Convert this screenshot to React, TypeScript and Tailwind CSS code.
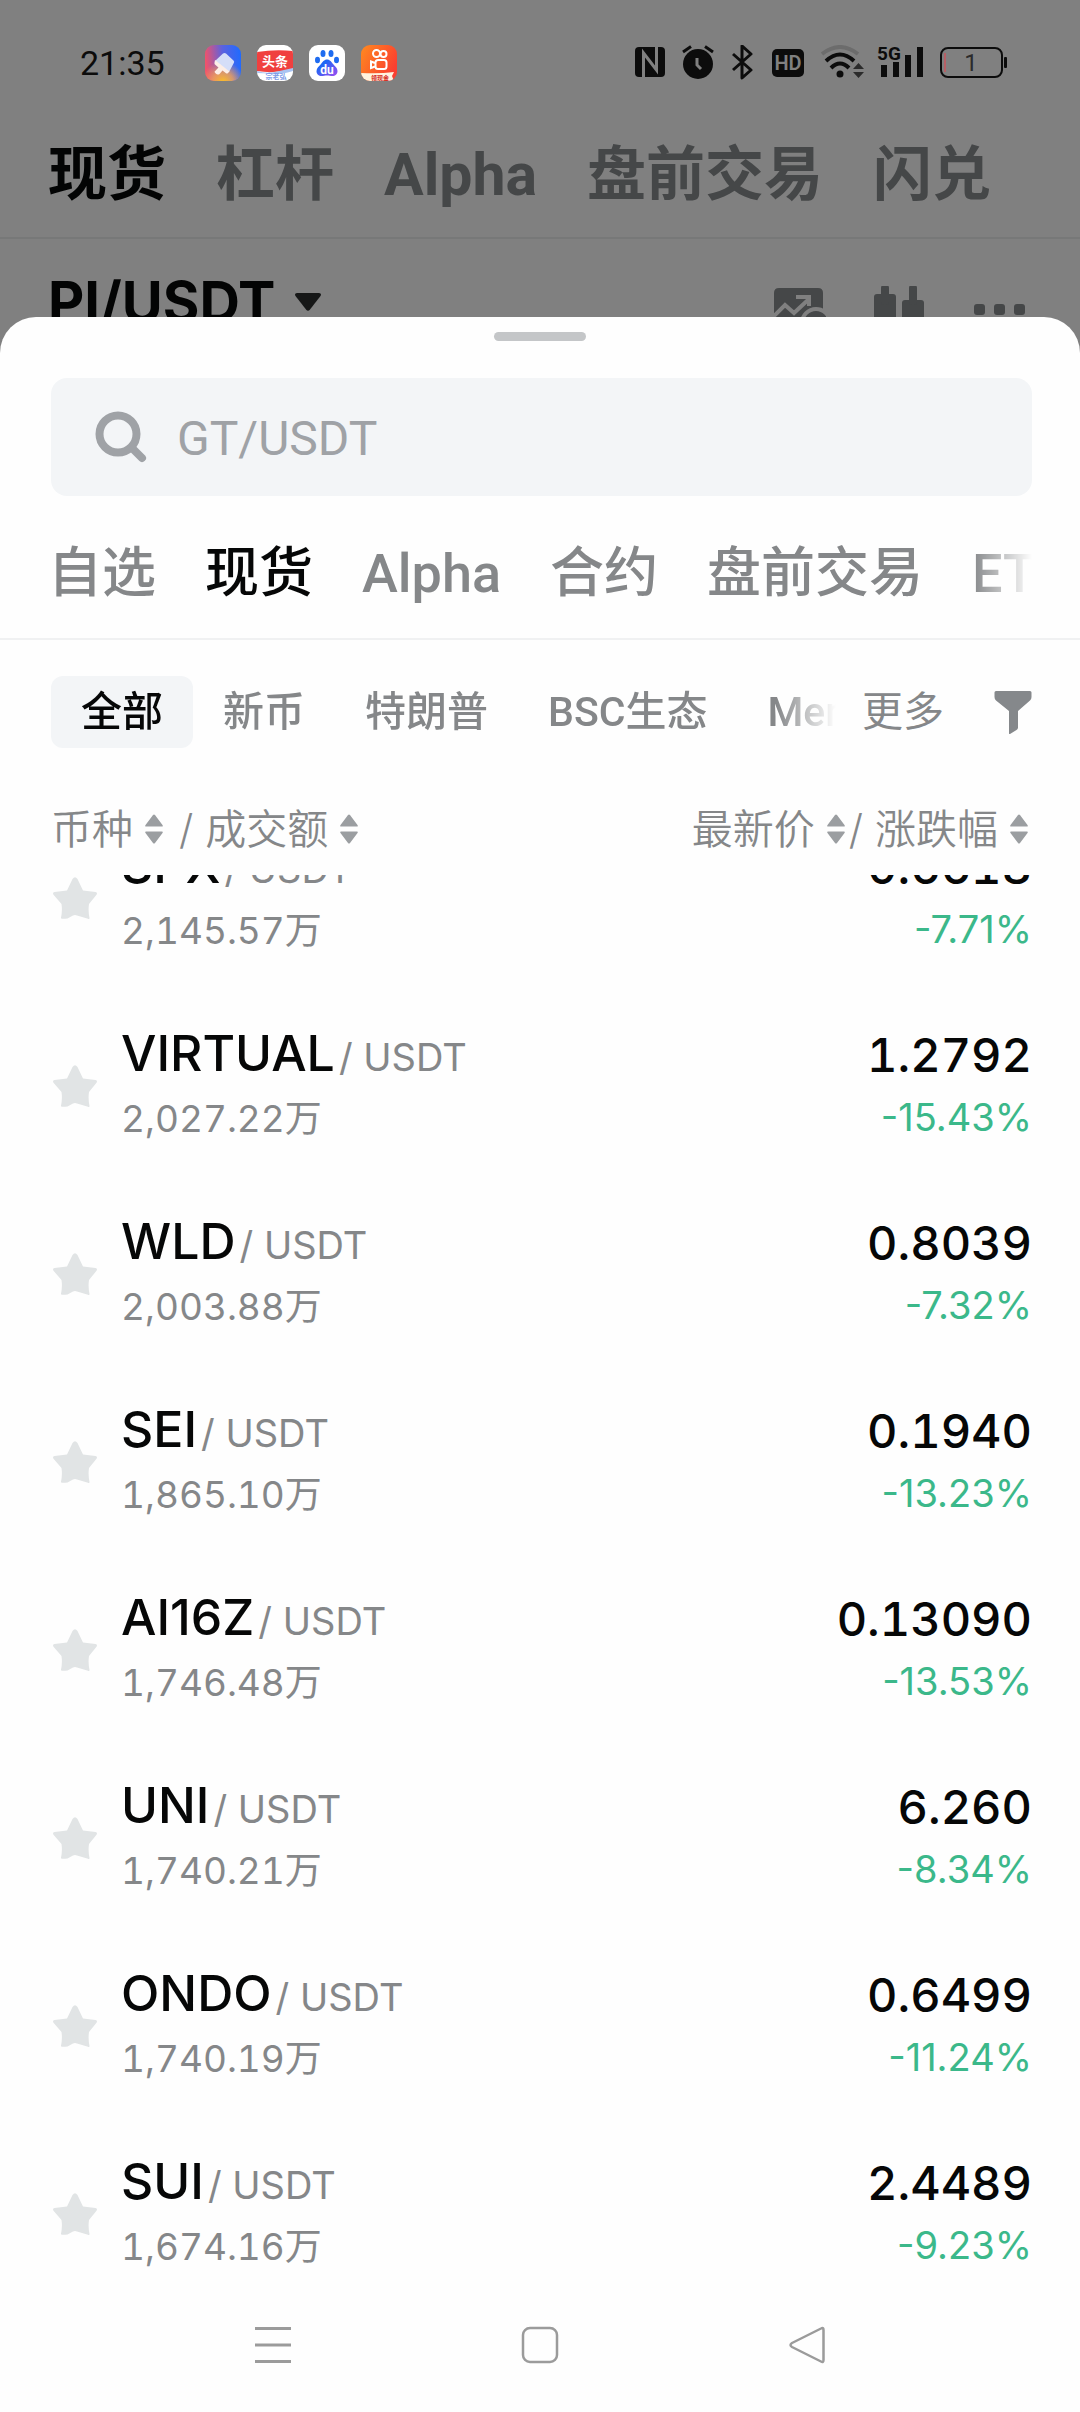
import { useState } from "react";
import clsx from "clsx";

const pageTabs = ["现货", "杠杆", "Alpha", "盘前交易", "闪兑"];
const sheetTabs = ["自选", "现货", "Alpha", "合约", "盘前交易", "ETF"];
const chips = ["全部", "新币", "特朗普", "BSC生态", "Meme"];

const pairs = [
  { base: "SPX", volume: "2,145.57万", price: "0.6618", change: "-7.71%" },
  { base: "VIRTUAL", volume: "2,027.22万", price: "1.2792", change: "-15.43%" },
  { base: "WLD", volume: "2,003.88万", price: "0.8039", change: "-7.32%" },
  { base: "SEI", volume: "1,865.10万", price: "0.1940", change: "-13.23%" },
  { base: "AI16Z", volume: "1,746.48万", price: "0.13090", change: "-13.53%" },
  { base: "UNI", volume: "1,740.21万", price: "6.260", change: "-8.34%" },
  { base: "ONDO", volume: "1,740.19万", price: "0.6499", change: "-11.24%" },
  { base: "SUI", volume: "1,674.16万", price: "2.4489", change: "-9.23%" },
];

function AppIcons() {
  return (
    <div className="flex gap-4">
      {/* Theme store */}
      <svg viewBox="0 0 36 36" className="w-9 h-9">
        <defs>
          <linearGradient id="brushBg" x1="0" y1="0.3" x2="1" y2="0.2">
            <stop offset="0" stopColor="#f0526b" />
            <stop offset="0.5" stopColor="#5a62e0" />
            <stop offset="1" stopColor="#1f6bff" />
          </linearGradient>
          <radialGradient id="brushGlow" cx="0.5" cy="1.05" r="0.6">
            <stop offset="0" stopColor="#ffc21f" />
            <stop offset="0.5" stopColor="#f5a355" stopOpacity="0.8" />
            <stop offset="1" stopColor="#f5a355" stopOpacity="0" />
          </radialGradient>
        </defs>
        <rect width="36" height="36" rx="9" fill="url(#brushBg)" />
        <rect width="36" height="36" rx="9" fill="url(#brushGlow)" />
        <path d="M18 8.500q1.500-1 3 0l7.500 7q1.200 1.200.3 2.500L24 27 10 16z" fill="#d5def8" />
        <path d="M10 15l14.500 11.500-1.500 1.500q-1 1-2 .2l-3.500-2.700-3 3.500q-2 1.200-3.500-.3-1.500-1.500-1.500-2l4-4.200-3-2.500q-1.500-1-1-2.500z" fill="#fdeee6" />
      </svg>
      {/* Toutiao */}
      <svg viewBox="0 0 36 36" className="w-9 h-9">
        <defs>
          <clipPath id="ttClip"><rect width="36" height="36" rx="9" /></clipPath>
        </defs>
        <g clipPath="url(#ttClip)">
          <rect width="36" height="36" fill="#fff" />
          <path d="M0 7q18-3 36-1v18q-18 5-36 2z" fill="#f0403f" />
          <path d="M0 26q9 3 18 1t18-4v3q-14 4-22 3T0 28z" fill="#a9c4f2" />
          <text x="18" y="21" textAnchor="middle" fontSize="13" fontWeight="700" fill="#fff">头条</text>
          <text x="19" y="34" textAnchor="middle" fontSize="7" fontWeight="700" fill="#7d9be8">宗老弘</text>
        </g>
      </svg>
      {/* Baidu */}
      <svg viewBox="0 0 36 36" className="w-9 h-9">
        <defs>
          <linearGradient id="pawBody" x1="0" y1="0" x2="1" y2="1">
            <stop offset="0.3" stopColor="#1f66f5" />
            <stop offset="1" stopColor="#a04df0" />
          </linearGradient>
        </defs>
        <rect width="36" height="36" rx="9" fill="#fff" />
        <ellipse cx="8.500" cy="15" rx="2.500" ry="3.300" fill="#1f6cf0" />
        <ellipse cx="14" cy="8.500" rx="2.500" ry="3.600" fill="#1f6cf0" />
        <ellipse cx="22" cy="8.500" rx="2.500" ry="3.600" fill="#1f6cf0" />
        <ellipse cx="27.500" cy="15" rx="2.500" ry="3.300" fill="#1f6cf0" />
        <path d="M18 14.500c3 0 4.500 2.500 6 4.500 2 2.300 4.500 4 4.500 7.200 0 3-2.300 4.800-5 4.800-2 0-3.500-.5-5.500-.5s-3.500.5-5.500.5c-2.700 0-5-1.800-5-4.800 0-3.200 2.500-4.900 4.500-7.200 1.500-2 3-4.500 6-4.500z" fill="url(#pawBody)" />
        <text x="18" y="28.500" textAnchor="middle" fontSize="12" fontWeight="700" fill="#fff">du</text>
      </svg>
      {/* Kuaishou */}
      <svg viewBox="0 0 36 36" className="w-9 h-9">
        <defs>
          <linearGradient id="ksBg" x1="0" y1="0" x2="1" y2="0.500">
            <stop offset="0" stopColor="#ff8a1f" />
            <stop offset="1" stopColor="#fb3f30" />
          </linearGradient>
          <clipPath id="ksClip"><rect width="36" height="36" rx="9" /></clipPath>
        </defs>
        <g clipPath="url(#ksClip)">
          <rect width="36" height="36" fill="url(#ksBg)" />
          <g fill="none" stroke="#fff" strokeWidth="2">
            <circle cx="15.500" cy="8.500" r="3.500" />
            <circle cx="22.500" cy="9" r="3" />
            <rect x="14.500" y="15" width="11" height="9" rx="2.500" />
            <path d="M14 18l-4-1.500v6.500l4-1.500" />
          </g>
          <path d="M0 28q18 1 33-1l-2 4 2 5H0z" fill="#fff3df" />
          <text x="19" y="34.500" textAnchor="middle" fontSize="6" fontWeight="700" fill="#d52b1e">领现金</text>
        </g>
      </svg>
    </div>
  );
}

function StatusIcons() {
  return (
    <svg viewBox="0 0 376 36" className="w-94 h-9" fill="#0c0c0c">
      {/* NFC */}
      <rect x="3" y="2" width="30" height="30" rx="4" />
      <path d="M11.500 32V8l13 17V2" fill="none" stroke="#808080" strokeWidth="3" />
      {/* Alarm */}
      <circle cx="66" cy="19" r="15" />
      <path d="M51 7l8-5.500M81 7l-8-5.500" stroke="#0c0c0c" strokeWidth="3" />
      <path d="M65 13v7l4 4" fill="none" stroke="#808080" strokeWidth="3" />
      {/* Bluetooth */}
      <path d="M101 9l18 16-9 8V1l9 8-18 16" fill="none" stroke="#0c0c0c" strokeWidth="3" strokeLinejoin="round" />
      {/* HD */}
      <rect x="140" y="4" width="32" height="28" rx="5" />
      <text x="156" y="25" textAnchor="middle" fontSize="20" fontWeight="600" fill="#808080">HD</text>
      {/* Wi-Fi */}
      <g fill="none" strokeWidth="4">
        <path d="M190 9q18-14 36 0" stroke="#6c6c6c" />
        <path d="M194 16q14-13 28 0" stroke="#0c0c0c" />
        <path d="M199 23q9-9 18 0" stroke="#0c0c0c" />
      </g>
      <circle cx="208" cy="29" r="3.500" />
      <path d="M221 24l5.500-6 5.500 6zM221 27h11l-5.500 6z" fill="#2b2b2b" />
      {/* Signal */}
      <text x="245" y="15" fontSize="19" fontWeight="700">5G</text>
      <path d="M249 20h6v12h-6zM261 17h6v15h-6zM273 10h6v22h-6zM285 2h6v30h-6z" />
      {/* Battery */}
      <rect x="309" y="3" width="61" height="29" rx="7" fill="none" stroke="#0c0c0c" strokeWidth="2" />
      <path d="M313 8v19" stroke="#c9545c" strokeWidth="1.500" />
      <text x="339" y="26" textAnchor="middle" fontSize="24" fill="#2b2b2b">1</text>
      <rect x="372" y="12" width="3" height="11" rx="1" />
    </svg>
  );
}

function SortArrows() {
  return (
    <svg viewBox="0 0 18 30" className="w-4.5 h-7.5" fill="#9b9ea1">
      <path d="M8 1q1-1.200 2 0l7.500 10q.8 1.500-.5 1.500H1q-1.300 0-.5-1.500zM8 29q1 1.200 2 0l7.500-10q.8-1.500-.5-1.500H1q-1.300 0-.5 1.500z" />
    </svg>
  );
}

function SortButton({ label }: { label: string }) {
  return (
    <button type="button" className="flex items-center gap-3 whitespace-nowrap">
      {label}
      <SortArrows />
    </button>
  );
}

function PairRow({ pair }: { pair: (typeof pairs)[number] }) {
  return (
    <tr className="flex h-47 items-center first:-mt-[71px]">
      <td className="flex flex-1 items-center">
        <button type="button" aria-label="收藏" className="mr-6 ml-0.5">
          <svg viewBox="0 0 44 42" className="w-11 h-10.5" fill="#e1e4e5">
            <path d="M19.500 2q2.500-3.500 5 0l5.500 11.500 12.500 1.500q2.500.8.8 3l-7.300 9q-1 7 .5 14 0 1.500-1.500.8L24 38.500q-2-1-4 0l-5.500 3q-7 1-6.500-.7 1.500-7 .5-13.800L.7 18q-1.700-2.200.8-3L14 13.500z" />
          </svg>
        </button>
        <div className="flex flex-col gap-0.5 text-[38px] leading-[60px] text-[#858789]">
          <p className="whitespace-nowrap">
            <span className="mr-1 text-[50px] font-medium text-[#060707]">{pair.base}</span>
            / USDT
          </p>
          <p className="text-[37px] tabular-nums">{pair.volume}</p>
        </div>
      </td>
      <td className="flex flex-col gap-0.5 text-right leading-[60px]">
        <span className="text-[47px] font-medium text-[#060707] tabular-nums">{pair.price}</span>
        <span className="text-[38px] text-[#3bb88a]">{pair.change}</span>
      </td>
    </tr>
  );
}

export default function App() {
  const [tab, setTab] = useState("现货");
  const [chip, setChip] = useState("全部");

  return (
    <main className="flex min-h-screen flex-col overflow-hidden bg-[#808080] font-['Roboto','Noto_Sans_CJK_SC',sans-serif]">
      {/* Status bar */}
      <div className="flex items-center justify-between pt-[45px] pr-[72px] pl-20">
        <div className="flex items-center gap-10">
          <time className="text-[34px] leading-9 text-[#0c0c0c]">21:35</time>
          <AppIcons />
        </div>
        <StatusIcons />
      </div>

      {/* Page behind the sheet */}
      <nav className="flex gap-[50px] border-b-2 border-[#777878] px-12 pt-[62px] pb-7.5 text-[59px] leading-16 font-bold whitespace-nowrap text-[#454748]">
        {pageTabs.map((t) => (
          <a key={t} href="#" className="first:text-[#030404]">{t}</a>
        ))}
      </nav>
      <div className="flex h-[78px] items-start justify-between overflow-hidden pt-[31px] pr-[54px] pl-12">
        <button type="button" className="flex items-center gap-5 font-['Inter',sans-serif] text-[56px] leading-16 font-bold text-[#030404]">
          PI/USDT
          <svg viewBox="0 0 26 18" className="w-6.5 h-4.5" fill="#161717">
            <path d="M2 0h22q3 .5 1.500 3L15 16.500q-2 2.500-4 0L.5 3Q-1 .5 2 0z" />
          </svg>
        </button>
        <div className="flex gap-12 pt-4">
          <svg viewBox="0 0 52 52" className="w-13 h-13" fill="#454748">
            <path d="M5 2h39q5 0 5 5v36H0V7q0-5 5-5z" />
            <path d="M-1 31l12-12 9 8 15-14m-13-2h13v9" fill="none" stroke="#808080" strokeWidth="4" />
            <circle cx="42" cy="37" r="14" stroke="#808080" strokeWidth="4" />
          </svg>
          <svg viewBox="0 0 52 52" className="w-13 h-13" fill="#454748">
            <rect x="0" y="8" width="22" height="40" rx="3" />
            <rect x="7" y="-1" width="8" height="20" rx="3" />
            <rect x="28" y="14" width="22" height="34" rx="3" />
            <rect x="35" y="-1" width="8" height="20" rx="3" />
          </svg>
          <svg viewBox="0 0 52 52" className="w-13 h-13" fill="#454748">
            <rect x="0" y="18" width="11" height="11" rx="3" />
            <rect x="20" y="18" width="11" height="11" rx="3" />
            <rect x="40" y="18" width="11" height="11" rx="3" />
          </svg>
        </div>
      </div>

      {/* Market sheet */}
      <section className="flex flex-1 flex-col rounded-t-[36px] bg-[#fefefe] pt-[15px]">
        <div className="mx-auto h-[9px] w-23 rounded-full bg-[#c4c6c8]" />

        <label className="mt-[37px] mr-12 ml-[51px] flex h-[118px] items-center gap-7.5 rounded-2xl bg-[#f3f5f7] px-11">
          <svg viewBox="0 0 52 52" className="w-13 h-13 shrink-0" fill="none" stroke="#9fa2a6">
            <circle cx="23" cy="23" r="18.500" strokeWidth="8" />
            <path d="M38 38l9 9" strokeWidth="8" strokeLinecap="round" />
          </svg>
          <input
            type="text"
            aria-label="搜索"
            placeholder="GT/USDT"
            className="min-w-0 flex-1 bg-transparent pt-1 text-[48px] text-[#060707] outline-none placeholder:text-[#9fa2a6]"
          />
        </label>

        <div className="mt-12 border-b-2 border-[#f0f1f2] px-12 pb-8.5">
          <div className="flex gap-[49px] overflow-hidden text-[54px] leading-[60px] font-medium whitespace-nowrap text-[#858789] [mask-image:linear-gradient(to_right,#000_calc(100%-60px),transparent)]">
            {sheetTabs.map((t) => (
              <button key={t} type="button" onClick={() => setTab(t)} className={clsx("shrink-0", tab === t && "text-[#060707]")}>
                {t}
              </button>
            ))}
          </div>
        </div>

        <div className="mt-9 mr-12 ml-[51px] flex items-center text-[41px] leading-[72px] whitespace-nowrap text-[#858789]">
          <div className="flex min-w-0 flex-1 overflow-hidden font-medium [mask-image:linear-gradient(to_right,#000_calc(100%-60px),transparent)]">
            {chips.map((c) => (
              <button
                key={c}
                type="button"
                onClick={() => setChip(c)}
                className={clsx("shrink-0 rounded-xl px-[30px]", chip === c && "bg-[#f3f5f7] text-[#060707]")}
              >
                {c}
              </button>
            ))}
          </div>
          <button type="button" className="ml-6.5">更多</button>
          <button type="button" aria-label="筛选" className="ml-[50px]">
            <svg viewBox="0 0 38 44" className="w-9.5 h-11" fill="#85888b">
              <path d="M2 1h34q1.500 0 1.500 1.500V7q0 2-1.500 3.500L24 21v16.500q0 1.500-1.500 2.500L16 44q-1 .5-1-1V21L2 10.500Q.5 9 .5 7V2.500Q.5 1 2 1z" />
            </svg>
          </button>
        </div>

        <table className="mr-12 ml-[51px] block font-['Inter','Noto_Sans_CJK_SC',sans-serif]">
          <thead className="block">
            <tr className="flex justify-between pt-[57px] pb-[22px] text-[41px] leading-12 text-[#858789]">
              <th className="flex items-center font-[350]">
                <SortButton label="币种" />
                <span className="mx-3 pl-1">/</span>
                <SortButton label="成交额" />
              </th>
              <th className="flex items-center pr-1 font-[350]">
                <SortButton label="最新价" />
                <span className="mr-3 pl-1">/</span>
                <SortButton label="涨跌幅" />
              </th>
            </tr>
          </thead>
          <tbody className="block overflow-hidden">
            {pairs.map((p) => (
              <PairRow key={p.base} pair={p} />
            ))}
          </tbody>
        </table>

        {/* System navigation */}
        <nav className="mt-auto flex justify-between px-[254px] pt-4.5 pb-12">
          <button type="button" aria-label="最近任务">
            <svg viewBox="0 0 38 38" className="w-9.5 h-9.5" stroke="#9b9b9b" strokeWidth="3">
              <path d="M1 2.500h36M1 19h36M1 35.500h36" />
            </svg>
          </button>
          <button type="button" aria-label="主屏幕">
            <svg viewBox="0 0 38 38" className="w-9.5 h-9.5" fill="none" stroke="#9b9b9b" strokeWidth="2.500">
              <rect x="2" y="2" width="34" height="34" rx="7" />
            </svg>
          </button>
          <button type="button" aria-label="返回">
            <svg viewBox="0 0 38 38" className="w-9.5 h-9.5" fill="none" stroke="#9b9b9b" strokeWidth="2.500" strokeLinejoin="round">
              <path d="M33 2.500q2.500-1.500 2.500 1.500v30q0 3-2.500 1.500L4 21q-3-2 0-4z" />
            </svg>
          </button>
        </nav>
      </section>
    </main>
  );
}
